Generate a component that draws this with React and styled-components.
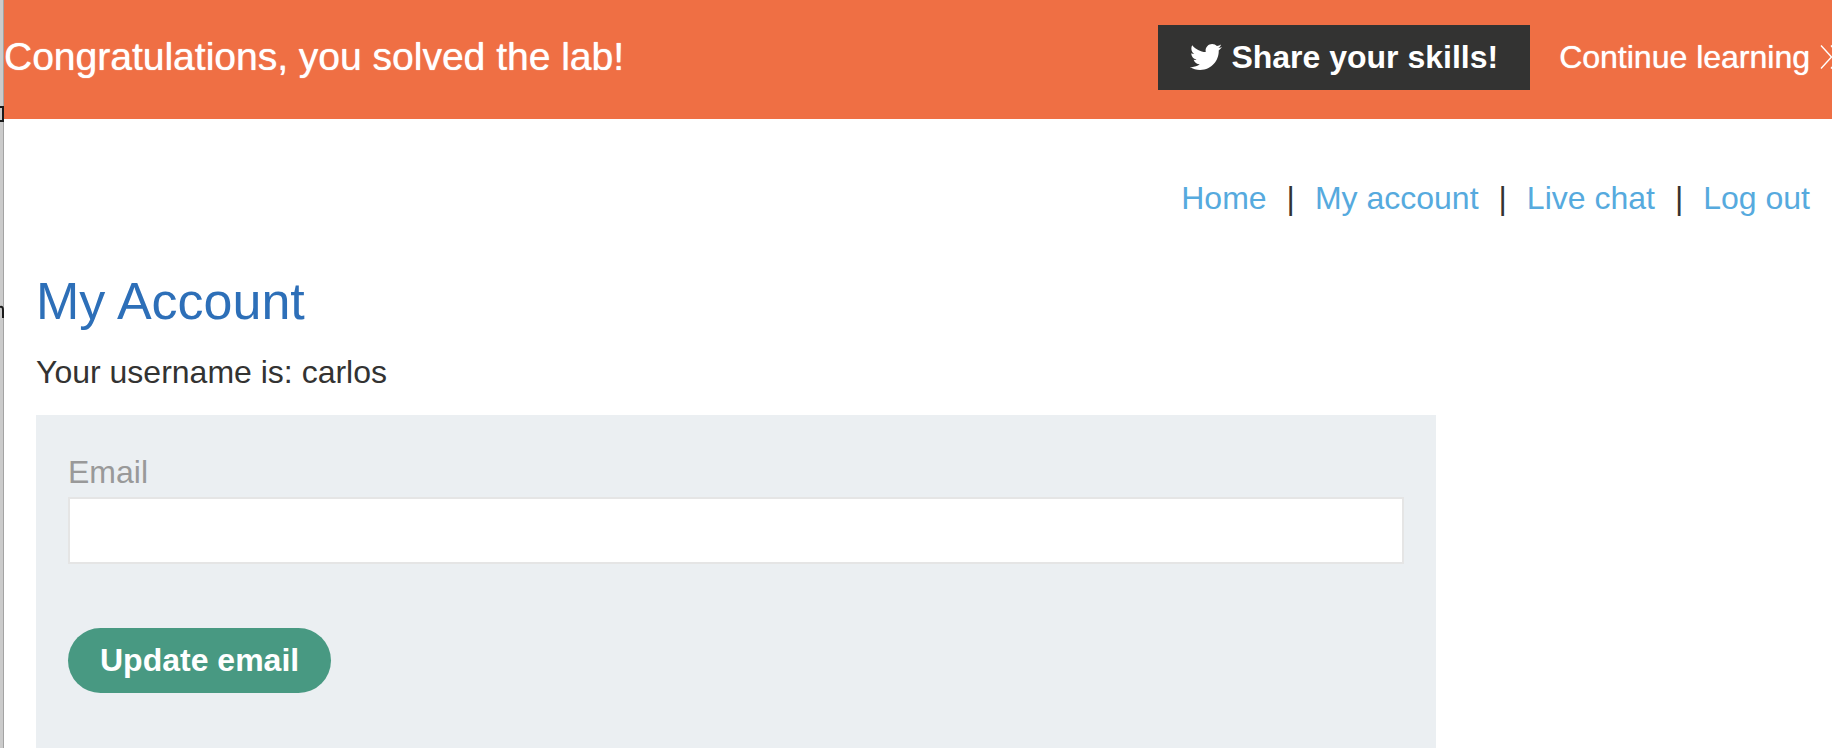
import React from 'react';
import styled, { createGlobalStyle } from 'styled-components';
import { FaTwitter } from 'react-icons/fa';

const GlobalStyle = createGlobalStyle`
  *, *::before, *::after { box-sizing: border-box; }
  html, body { margin: 0; background: #fff; }
  body {
    color: #333332;
    font-family: "Liberation Sans", Arial, sans-serif;
    font-size: 32px;
    line-height: 36px;
  }
`;

const Screen = styled.div`
  display: flex;
  height: 100vh;
  overflow: hidden;
`;

const Edge = styled.div`
  flex: 0 0 4px;
  min-width: 0;
  background: #cbcbcb;
  border-right: 1px solid #a3a3a3;
`;

const EdgeMarks = styled.svg`
  display: block;
`;

const Page = styled.div`
  flex: 1;
  min-width: 0;
`;

const Banner = styled.header`
  display: flex;
  align-items: center;
  justify-content: space-between;
  height: 119px;
  padding-bottom: 4px;
  background: #ef6f44;
  color: #fff;
  white-space: nowrap;
`;

const BannerTitle = styled.h4`
  margin: 0;
  padding-bottom: 2px;
  font-size: 39px;
  font-weight: 400;
  line-height: 48px;
  text-shadow: 0 0 1px #fff;
`;

const BannerActions = styled.div`
  display: flex;
  align-items: center;
  gap: 29px;
`;

const ShareButton = styled.button`
  display: flex;
  align-items: center;
  gap: 9px;
  height: 65px;
  padding: 0 32px 2px;
  border: 0;
  background: #333332;
  color: #fff;
  font: inherit;
  font-weight: 700;
`;

const ContinueLink = styled.a`
  display: flex;
  align-items: center;
  gap: 10px;
  padding-bottom: 2px;
  color: inherit;
  text-decoration: none;
  text-shadow: 0 0 1px #fff;
`;

const Nav = styled.nav`
  display: flex;
  justify-content: flex-end;
  gap: 20px;
  padding: 61px 22px 0;
`;

const NavLink = styled.a`
  color: #56aade;
  text-decoration: none;
`;

const Content = styled.main`
  padding: 55px 32px 0;
`;

const Title = styled.h1`
  margin: 0;
  color: #2d6fb8;
  font-size: 52px;
  font-weight: 400;
  line-height: 60px;
`;

const Username = styled.p`
  margin: 23px 0 25px;
`;

const Form = styled.form`
  max-width: 1400px;
  padding: 39px 32px 120px;
  background: #ebeff2;
`;

const Label = styled.label`
  display: block;
  color: #999;
`;

const EmailInput = styled.input`
  display: block;
  width: 100%;
  height: 67px;
  margin: 7px 0 64px;
  padding: 0 16px;
  border: 2px solid #e5e5e5;
  background: #fff;
  font: inherit;
  outline: 0;
`;

const SubmitButton = styled.button`
  height: 65px;
  padding: 0 32px 2px;
  border: 0;
  border-radius: 33px;
  background: #489982;
  color: #fff;
  font: inherit;
  font-weight: 700;
`;

const links = ['Home', 'My account', 'Live chat', 'Log out'];

export default function App() {
  return (
    <>
      <GlobalStyle />
      <Screen>
        <Edge>
          <EdgeMarks width="4" height="330" viewBox="0 0 4 330" aria-hidden="true">
            <path d="M0 107H3V121H0" fill="none" stroke="#1a1a1a" strokeWidth="2" />
            <path d="M0 307Q3 306 3 310V318" fill="none" stroke="#1a1a1a" strokeWidth="2" />
          </EdgeMarks>
        </Edge>
        <Page>
          <Banner>
            <BannerTitle>Congratulations, you solved the lab!</BannerTitle>
            <BannerActions>
              <ShareButton type="button">
                <FaTwitter size={32} aria-hidden="true" />
                Share your skills!
              </ShareButton>
              <ContinueLink href="#learn">
                Continue learning
                <svg width="12" height="24" viewBox="0 0 12 24" fill="none" stroke="#fff" strokeWidth="1.4" aria-hidden="true">
                  <path d="M1 0.5L11.5 12L1 23.5M11 0.5L21.5 12L11 23.5" />
                </svg>
              </ContinueLink>
            </BannerActions>
          </Banner>
          <Nav>
            {links.map((name, i) => (
              <React.Fragment key={name}>
                {i > 0 && <span>|</span>}
                <NavLink href="#nav">{name}</NavLink>
              </React.Fragment>
            ))}
          </Nav>
          <Content>
            <Title>My Account</Title>
            <Username>Your username is: carlos</Username>
            <Form>
              <Label htmlFor="email">Email</Label>
              <EmailInput id="email" type="email" />
              <SubmitButton type="button">Update email</SubmitButton>
            </Form>
          </Content>
        </Page>
      </Screen>
    </>
  );
}
